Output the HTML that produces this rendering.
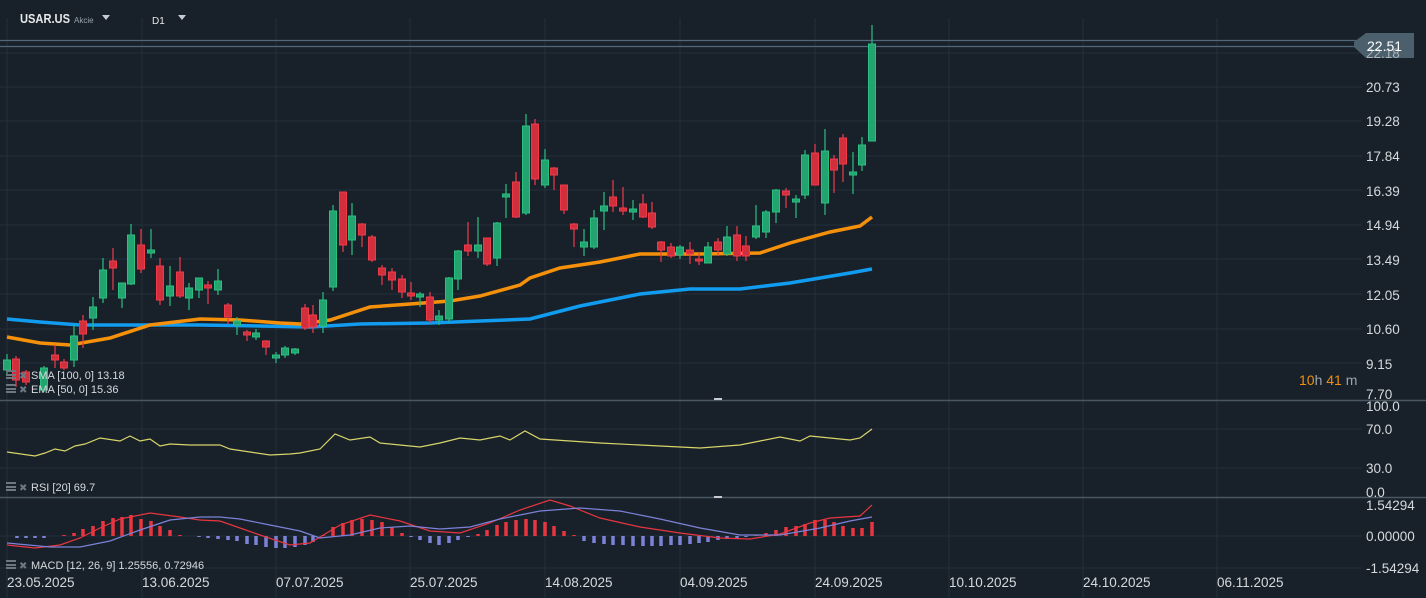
<!DOCTYPE html>
<html><head><meta charset="utf-8"><style>
html,body{margin:0;padding:0;background:#18212a;width:1426px;height:598px;overflow:hidden;font-family:"Liberation Sans",sans-serif}
svg{display:block}
text{font-family:"Liberation Sans",sans-serif}
</style></head><body>
<svg width="1426" height="598" viewBox="0 0 1426 598" xmlns="http://www.w3.org/2000/svg">
<rect width="1426" height="598" fill="#18212a"/>
<g stroke="#243039" stroke-width="1">
<path d="M7 18V598M142 18V598M276 18V598M410 18V598M545 18V598M680 18V598M815 18V598M949 18V598M1083 18V598M1217 18V598"/>
<path d="M0 53H1362M0 87H1362M0 121H1362M0 156H1362M0 190H1362M0 225H1362M0 259H1362M0 294H1362M0 329H1362M0 363H1362M0 429H1362M0 468H1362M0 536H1362M0 568H1362"/>
</g>
<path d="M0 400.5H1426M0 497.5H1426" stroke="#4a5660" stroke-width="1.5"/>
<rect x="714" y="398" width="8" height="2" fill="#c8ccd0"/><rect x="714" y="496" width="8" height="2" fill="#c8ccd0"/>
<path d="M0 40.5H1362M0 46.5H1362" stroke="#52687a" stroke-width="1.2"/>
<polygon points="1354,42 1366,33 1414,33 1414,58 1366,58 1354,47" fill="#4b5f6c"/>
<polyline fill="none" stroke="#129cf0" stroke-width="3.5" points="7,319 40,322 80,325 150,325 200,325 260,326 310,327 360,324 430,323 480,321 530,319 580,306 640,294 690,289 740,289 790,283 820,278 850,273 872,269"/>
<polyline fill="none" stroke="#f5900a" stroke-width="3.5" points="7,337 40,343 70,345 110,338 150,325 200,319 240,320 280,323 300,324 330,320 370,307 410,304 450,301 480,296 520,285 530,278 560,268 600,262 640,254 700,254 760,253 790,243 830,232 860,226 872,217"/>
<g stroke="#2bbf80" stroke-width="1.2">
<path d="M7 354V375M44 366V392M74 325V367M93 297V330M103 258V303M122 283V308M131 224V285M151 229V258M170 266V306M189 283V310M199 278V298M218 269V295M237 317V335M256 329V340M276 352V363M285 346V358M295 348V355M323 292V333M333 205V291M352 203V255M420 292V307M439 310V325M449 277V322M458 250V290M478 217V258M497 222V266M506 184V218M526 114V215M545 149V188M584 229V256M594 210V249M604 192V230M633 200V220M680 245V259M708 242V263M727 226V256M756 205V239M766 210V238M776 189V223M796 195V218M805 150V199M825 129V215M853 152V194M862 137V171M872 25V141"/>
</g>
<g stroke="#f03a4a" stroke-width="1.2">
<path d="M16 356V387M26 370V385M55 345V368M64 359V370M83 315V348M113 248V290M141 229V273M160 258V305M180 257V298M208 281V304M228 303V324M247 330V341M266 340V355M305 304V330M313 305V333M343 192V252M362 223V247M372 235V262M382 265V285M392 268V290M402 275V298M411 282V300M430 292V323M468 222V256M487 238V266M516 172V218M535 119V185M554 167V190M564 185V214M574 223V247M613 180V212M623 187V215M643 194V218M652 202V229M661 241V262M671 243V258M690 242V264M699 253V265M718 238V256M737 226V261M746 236V261M786 188V208M815 144V185M834 155V193M843 134V182"/>
</g>
<g fill="#23a36f" stroke="#2bbf80" stroke-width="1">
<rect x="3.5" y="360" width="7" height="10"/><rect x="40.5" y="368" width="7" height="22"/><rect x="70.5" y="336" width="7" height="24"/><rect x="89.5" y="307" width="7" height="11"/><rect x="99.5" y="270" width="7" height="28"/><rect x="118.5" y="283" width="7" height="15"/><rect x="127.5" y="235" width="7" height="49"/><rect x="147.5" y="250" width="7" height="3"/><rect x="166.5" y="286" width="7" height="10"/><rect x="185.5" y="288" width="7" height="10"/><rect x="195.5" y="278" width="7" height="12"/><rect x="214.5" y="281" width="7" height="9"/><rect x="233.5" y="321" width="7" height="4"/><rect x="252.5" y="333" width="7" height="4"/><rect x="272.5" y="355" width="7" height="3"/><rect x="281.5" y="348" width="7" height="7"/><rect x="291.5" y="349" width="7" height="4"/><rect x="319.5" y="300" width="7" height="26"/><rect x="329.5" y="211" width="7" height="76"/><rect x="348.5" y="216" width="7" height="24"/><rect x="416.5" y="294" width="7" height="3"/><rect x="435.5" y="316" width="7" height="4"/><rect x="445.5" y="278" width="7" height="41"/><rect x="454.5" y="251" width="7" height="28"/><rect x="474.5" y="245" width="7" height="6"/><rect x="493.5" y="223" width="7" height="35"/><rect x="502.5" y="194" width="7" height="3"/><rect x="522.5" y="126" width="7" height="87"/><rect x="541.5" y="160" width="7" height="25"/><rect x="580.5" y="242" width="7" height="5"/><rect x="590.5" y="218" width="7" height="29"/><rect x="600.5" y="206" width="7" height="5"/><rect x="629.5" y="209" width="7" height="3"/><rect x="676.5" y="247" width="7" height="8"/><rect x="704.5" y="247" width="7" height="16"/><rect x="723.5" y="237" width="7" height="17"/><rect x="752.5" y="226" width="7" height="11"/><rect x="762.5" y="212" width="7" height="20"/><rect x="772.5" y="190" width="7" height="22"/><rect x="792.5" y="199" width="7" height="3"/><rect x="801.5" y="155" width="7" height="40"/><rect x="821.5" y="151" width="7" height="52"/><rect x="849.5" y="172" width="7" height="3"/><rect x="858.5" y="145" width="7" height="20"/><rect x="868.5" y="44" width="7" height="97"/>
</g>
<g fill="#d22f3d" stroke="#f03a4a" stroke-width="1">
<rect x="12.5" y="359" width="7" height="21"/><rect x="22.5" y="372" width="7" height="10"/><rect x="51.5" y="355" width="7" height="5"/><rect x="60.5" y="362" width="7" height="6"/><rect x="79.5" y="321" width="7" height="13"/><rect x="109.5" y="261" width="7" height="7"/><rect x="137.5" y="245" width="7" height="24"/><rect x="156.5" y="266" width="7" height="34"/><rect x="176.5" y="272" width="7" height="24"/><rect x="204.5" y="285" width="7" height="3"/><rect x="224.5" y="305" width="7" height="12"/><rect x="243.5" y="332" width="7" height="3"/><rect x="262.5" y="341" width="7" height="6"/><rect x="301.5" y="308" width="7" height="20"/><rect x="309.5" y="315" width="7" height="12"/><rect x="339.5" y="192" width="7" height="53"/><rect x="358.5" y="224" width="7" height="11"/><rect x="368.5" y="237" width="7" height="23"/><rect x="378.5" y="268" width="7" height="7"/><rect x="388.5" y="272" width="7" height="8"/><rect x="398.5" y="279" width="7" height="13"/><rect x="407.5" y="293" width="7" height="3"/><rect x="426.5" y="297" width="7" height="23"/><rect x="464.5" y="245" width="7" height="6"/><rect x="483.5" y="238" width="7" height="26"/><rect x="512.5" y="182" width="7" height="35"/><rect x="531.5" y="124" width="7" height="55"/><rect x="550.5" y="168" width="7" height="7"/><rect x="560.5" y="185" width="7" height="25"/><rect x="570.5" y="224" width="7" height="5"/><rect x="609.5" y="197" width="7" height="9"/><rect x="619.5" y="208" width="7" height="3"/><rect x="639.5" y="204" width="7" height="13"/><rect x="648.5" y="213" width="7" height="14"/><rect x="657.5" y="242" width="7" height="8"/><rect x="667.5" y="247" width="7" height="9"/><rect x="686.5" y="250" width="7" height="4"/><rect x="695.5" y="259" width="7" height="2"/><rect x="714.5" y="242" width="7" height="8"/><rect x="733.5" y="235" width="7" height="21"/><rect x="742.5" y="246" width="7" height="10"/><rect x="782.5" y="191" width="7" height="4"/><rect x="811.5" y="153" width="7" height="32"/><rect x="830.5" y="159" width="7" height="11"/><rect x="839.5" y="138" width="7" height="26"/>
</g>
<polyline fill="none" stroke="#d8d46a" stroke-width="1.2" points="7,452 35,456 45,453 55,449 65,451 75,446 85,444 100,438 120,441 130,436 140,441 150,439 160,446 170,444 190,445 220,445 230,449 250,452 270,455 290,454 300,453 320,449 335,434 350,440 370,437 380,443 400,445 420,447 440,443 460,438 480,440 500,436 510,440 525,431 540,439 570,441 600,443 640,445 700,448 740,445 760,441 780,437 800,441 810,436 830,438 850,440 860,438 872,429"/>
<g stroke-width="3.5">
<path stroke="#7c82d8" d="M17 536V538M26 536V538M35 536V538M44 536V538M199 536V537M208 536V538M218 536V539M228 536V540M237 536V541M247 536V544M256 536V545M266 536V547M276 536V548M285 536V548M295 536V547M305 536V545M313 536V542M411 536V537M420 536V540M430 536V543M439 536V545M449 536V543M458 536V540M468 536V537M584 536V541M594 536V543M604 536V544M613 536V545M623 536V545M633 536V546M643 536V546M652 536V546M661 536V546M671 536V545M680 536V545M690 536V544M699 536V543M708 536V542M718 536V540M727 536V539M737 536V538M746 536V537"/>
<path stroke="#e8353f" d="M64 536V535M74 536V533M83 536V529M93 536V526M103 536V521M113 536V518M122 536V517M131 536V515M141 536V519M151 536V521M160 536V526M170 536V530M180 536V535M323 536V535M333 536V527M343 536V523M352 536V520M362 536V519M372 536V520M382 536V522M392 536V527M402 536V533M478 536V534M487 536V530M497 536V525M506 536V522M516 536V520M526 536V519M535 536V520M545 536V522M554 536V526M564 536V531M574 536V535M756 536V535M766 536V533M776 536V530M786 536V527M796 536V526M805 536V524M815 536V520M825 536V520M834 536V522M843 536V526M853 536V528M862 536V528M872 536V522"/>
</g>
<polyline fill="none" stroke="#e8353f" stroke-width="1.2" points="7,545 35,548 60,545 80,538 100,528 120,519 150,513 180,517 200,520 220,521 240,528 260,535 290,545 310,543 340,525 370,515 400,521 430,531 460,533 490,523 520,510 550,500 570,506 600,518 640,527 680,533 720,538 750,539 780,534 810,523 830,518 860,516 872,505"/>
<polyline fill="none" stroke="#7c82d8" stroke-width="1.2" points="7,543 50,547 80,547 110,541 140,530 170,520 200,517 220,517 240,519 270,525 300,531 320,538 350,535 380,528 410,526 440,529 470,527 500,519 540,511 580,508 620,511 660,519 700,528 740,535 780,535 820,528 850,521 872,517"/>
<g fill="#d6dadd" font-size="13.5">
<text x="1366" y="58" fill="#aab4bb">22.18</text>
<text x="1366" y="92">20.73</text><text x="1366" y="126">19.28</text><text x="1366" y="161">17.84</text><text x="1366" y="196">16.39</text><text x="1366" y="230">14.94</text><text x="1366" y="265">13.49</text><text x="1366" y="300">12.05</text><text x="1366" y="334">10.60</text><text x="1366" y="369">9.15</text><text x="1366" y="399">7.70</text>
<text x="1366" y="411">100.0</text><text x="1366" y="434">70.0</text><text x="1366" y="473">30.0</text><text x="1366" y="497">0.0</text>
<text x="1366" y="510">1.54294</text><text x="1366" y="541">0.00000</text><text x="1366" y="573">-1.54294</text>
<text x="7" y="587">23.05.2025</text><text x="142" y="587">13.06.2025</text><text x="276" y="587">07.07.2025</text><text x="410" y="587">25.07.2025</text><text x="545" y="587">14.08.2025</text><text x="680" y="587">04.09.2025</text><text x="815" y="587">24.09.2025</text><text x="949" y="587">10.10.2025</text><text x="1083" y="587">24.10.2025</text><text x="1217" y="587">06.11.2025</text>
</g>
<text x="1367" y="51" fill="#ffffff" font-size="14">22.51</text>
<text x="1299" y="385" font-size="14" fill="#f0900a">10<tspan fill="#9aa4ab">h </tspan>41<tspan fill="#9aa4ab"> m</tspan></text>
<g fill="#d6dadd" font-size="11">
<text x="31" y="379">SMA  [100,  0]  13.18</text>
<text x="31" y="393">EMA  [50,  0]  15.36</text>
<text x="31" y="491">RSI  [20]  69.7</text>
<text x="31" y="569">MACD  [12,  26,  9]  1.25556,  0.72946</text>
</g>
<g fill="#6c7780">
<rect x="6" y="370" width="10" height="2"/><rect x="6" y="374" width="10" height="2"/><rect x="6" y="377" width="10" height="2"/><text x="19" y="379" font-size="10">✖</text>
<rect x="6" y="384" width="10" height="2"/><rect x="6" y="388" width="10" height="2"/><rect x="6" y="391" width="10" height="2"/><text x="19" y="393" font-size="10">✖</text>
<rect x="6" y="482" width="10" height="2"/><rect x="6" y="486" width="10" height="2"/><rect x="6" y="489" width="10" height="2"/><text x="19" y="491" font-size="10">✖</text>
<rect x="6" y="560" width="10" height="2"/><rect x="6" y="564" width="10" height="2"/><rect x="6" y="567" width="10" height="2"/><text x="19" y="569" font-size="10">✖</text>
</g>
<text x="20" y="23" fill="#e6e8ea" font-size="13" font-weight="bold" textLength="50" lengthAdjust="spacingAndGlyphs">USAR.US</text>
<text x="74" y="23" fill="#9aa4ab" font-size="8">Akcie</text>
<polygon points="102,15 110,15 106,20" fill="#c8ccd0"/>
<text x="152" y="24" fill="#e6e8ea" font-size="10">D1</text>
<polygon points="178,15 186,15 182,20" fill="#c8ccd0"/>
</svg>
</body></html>
